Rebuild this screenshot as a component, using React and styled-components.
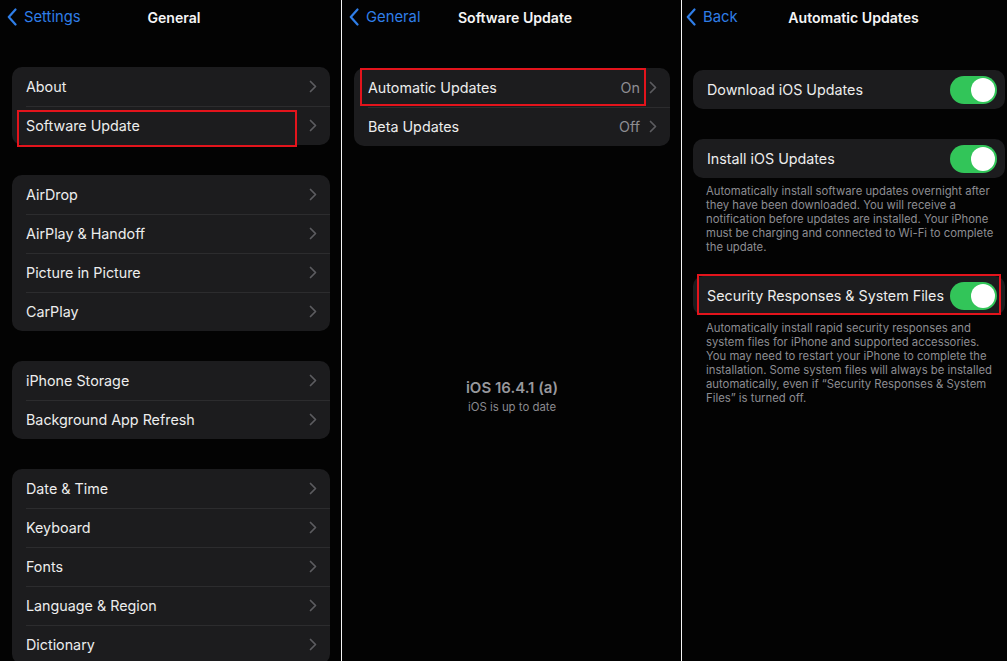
import styled, { createGlobalStyle } from "styled-components";

const GlobalStyle = createGlobalStyle`
  html, body {
    margin: 0;
    padding: 0;
    background: #000;
  }
  body {
    font-family: Inter, "Liberation Sans", sans-serif;
    -webkit-font-smoothing: antialiased;
  }
`;

const BackIcon = () => (
  <svg width="10" height="18" viewBox="0 0 10 18" fill="none">
    <path d="M8.5 1.5L1.8 9l6.7 7.5" stroke="#2f7ee8" strokeWidth="2.2" strokeLinecap="round" strokeLinejoin="round" />
  </svg>
);

const ChevronIcon = () => (
  <svg width="8" height="13" viewBox="0 0 8 13" fill="none">
    <path d="M1.5 1.5L6.5 6.5 1.5 11.5" stroke="#5c5c60" strokeWidth="1.7" strokeLinecap="round" strokeLinejoin="round" />
  </svg>
);

const general = [
  [
    { label: "About" },
    { label: "Software Update", mark: { left: 5, top: 4, width: 280, height: 37 } },
  ],
  [
    { label: "AirDrop" },
    { label: "AirPlay & Handoff" },
    { label: "Picture in Picture" },
    { label: "CarPlay" },
  ],
  [{ label: "iPhone Storage" }, { label: "Background App Refresh" }],
  [
    { label: "Date & Time" },
    { label: "Keyboard" },
    { label: "Fonts" },
    { label: "Language & Region" },
    { label: "Dictionary" },
  ],
];

const App = () => {
  return (
    <>
      <GlobalStyle />
      <Screen>
        <Panel $width={341}>
          <NavBar>
            <BackLink>
              <BackIcon />
              Settings
            </BackLink>
            <NavTitle>General</NavTitle>
          </NavBar>
          <Content>
            {general.map((group, gi) => (
              <Group key={gi}>
                {group.map((item) => (
                  <Row key={item.label}>
                    <Label>{item.label}</Label>
                    <ChevronIcon />
                    {item.mark && <Highlight {...item.mark} />}
                  </Row>
                ))}
              </Group>
            ))}
          </Content>
        </Panel>

        <Divider />

        <Panel $width={339}>
          <NavBar>
            <BackLink>
              <BackIcon />
              General
            </BackLink>
            <NavTitle>Software Update</NavTitle>
          </NavBar>
          <Content $top={34}>
            <Group>
              <Row>
                <Label>Automatic Updates</Label>
                <Value>On</Value>
                <ChevronIcon />
                <Highlight left={6} top={0} width={286} height={38} />
              </Row>
              <Row>
                <Label>Beta Updates</Label>
                <Value>Off</Value>
                <ChevronIcon />
              </Row>
            </Group>
            <VersionInfo>
              <VersionName>iOS 16.4.1 (a)</VersionName>
              <VersionStatus>iOS is up to date</VersionStatus>
            </VersionInfo>
          </Content>
        </Panel>

        <Divider />

        <Panel $width={339}>
          <NavBar $backPad={4}>
            <BackLink>
              <BackIcon />
              Back
            </BackLink>
            <NavTitle>Automatic Updates</NavTitle>
          </NavBar>
          <Content $top={36} $left={11} $right={16}>
            <Group>
              <Row $toggle>
                <Label>Download iOS Updates</Label>
                <Toggle />
              </Row>
            </Group>
            <Group $gap={0}>
              <Row $toggle>
                <Label>Install iOS Updates</Label>
                <Toggle />
              </Row>
            </Group>
            <Footer>
              Automatically install software updates overnight after
              <br />
              they have been downloaded. You will receive a
              <br />
              notification before updates are installed. Your iPhone
              <br />
              must be charging and connected to Wi-Fi to complete
              <br />
              the update.
            </Footer>
            <Group $gap={0}>
              <Row $toggle>
                <Label>Security Responses &amp; System Files</Label>
                <Toggle />
                <Highlight left={4} top={-2} width={304} height={41} />
              </Row>
            </Group>
            <Footer>
              Automatically install rapid security responses and
              <br />
              system files for iPhone and supported accessories.
              <br />
              You may need to restart your iPhone to complete the
              <br />
              installation. Some system files will always be installed
              <br />
              automatically, even if “Security Responses &amp; System
              <br />
              Files” is turned off.
            </Footer>
          </Content>
        </Panel>
      </Screen>
    </>
  );
};

export default App;

const Screen = styled.div`
  display: flex;
  width: 1007px;
  height: 661px;
  overflow: hidden;
  background: #000;
`;

const Panel = styled.section`
  flex: 0 0 ${(p) => p.$width}px;
  width: ${(p) => p.$width}px;
  height: 100%;
  overflow: hidden;
  background: #030303;
`;

const Divider = styled.div`
  flex: 0 0 1px;
  background: #f4f4f4;
`;

const NavBar = styled.header`
  display: grid;
  grid-template-columns: 1fr auto 1fr;
  align-items: center;
  height: 34px;
  padding-left: ${(p) => p.$backPad ?? 7}px;
`;

const BackLink = styled.div`
  display: flex;
  align-items: center;
  gap: 7px;
  font-size: 14.8px;
  color: #2f7ee8;
`;

const NavTitle = styled.div`
  font-size: 14.1px;
  font-weight: 600;
  color: #f5f5f5;
`;

const Content = styled.div`
  padding: ${(p) => p.$top ?? 33}px ${(p) => p.$right ?? 11}px 0
    ${(p) => p.$left ?? 12}px;
`;

const Group = styled.div`
  background: #1c1c1e;
  border-radius: 10px;
  margin-bottom: ${(p) => p.$gap ?? 30}px;
`;

const Row = styled.div`
  position: relative;
  display: flex;
  align-items: center;
  height: 39px;
  padding: 0 ${(p) => (p.$toggle ? 8 : 13)}px 0 14px;

  & + & {
    &::before {
      content: "";
      position: absolute;
      top: 0;
      left: 14px;
      right: 0;
      height: 1px;
      background: #2c2c2e;
    }
  }
`;

const Label = styled.span`
  flex: 1;
  font-size: 14.3px;
  color: #ededed;
  white-space: nowrap;
`;

const Value = styled.span`
  font-size: 14.3px;
  color: #8e8e93;
  margin-right: 9px;
`;

const Highlight = styled.div.attrs((p) => ({
  style: { left: p.left, top: p.top, width: p.width, height: p.height },
}))`
  position: absolute;
  box-sizing: border-box;
  border: 2px solid #e3141c;
  pointer-events: none;
`;

const Toggle = styled.span`
  position: relative;
  flex: 0 0 47px;
  height: 28px;
  border-radius: 14px;
  background: #32c559;

  &::after {
    content: "";
    position: absolute;
    top: 2px;
    right: 2px;
    width: 24px;
    height: 24px;
    border-radius: 50%;
    background: #fff;
  }
`;

const Footer = styled.p`
  margin: 0 0 22px;
  padding: 6px 0 0 13px;
  font-size: 11.3px;
  line-height: 14px;
  color: #8d8d92;
  white-space: nowrap;
`;

const VersionInfo = styled.div`
  margin-top: 232px;
  text-align: center;
`;

const VersionName = styled.div`
  font-size: 15px;
  line-height: 20px;
  font-weight: 600;
  color: #98989d;
`;

const VersionStatus = styled.div`
  font-size: 11.4px;
  line-height: 18px;
  color: #8a8a8f;
`;
